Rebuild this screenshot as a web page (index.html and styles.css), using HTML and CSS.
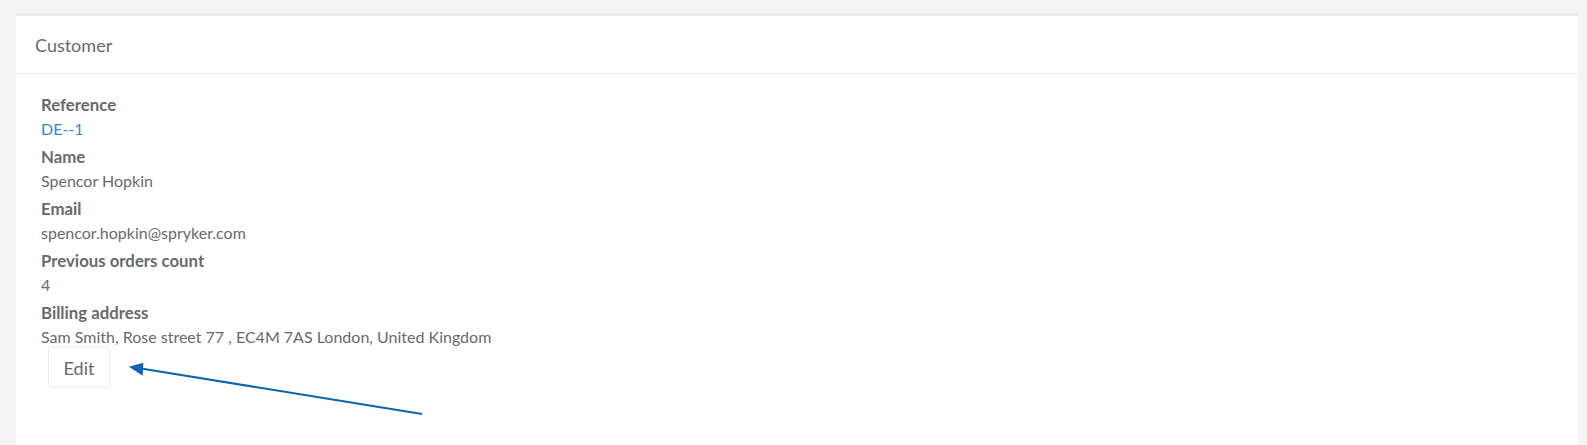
FILE: index.html
```html
<!DOCTYPE html>
<html lang="en">
<head>
<meta charset="utf-8">
<title>Customer</title>
<link rel="stylesheet" href="styles.css">
</head>
<body>
<div class="panel">
  <div class="panel-title">
    <h5>Customer</h5>
  </div>
  <div class="panel-content">
    <dl class="info">
      <dt>Reference</dt>
      <dd><a href="#" class="link">DE--1</a></dd>
      <dt>Name</dt>
      <dd>Spencor Hopkin</dd>
      <dt>Email</dt>
      <dd>spencor.hopkin@spryker.com</dd>
      <dt>Previous orders count</dt>
      <dd>4</dd>
      <dt>Billing address</dt>
      <dd class="last">Sam Smith, Rose street 77 , EC4M 7AS London, United Kingdom</dd>
    </dl>
    <a href="#" class="btn">Edit</a>
  </div>
  <svg class="arrow" width="440" height="100" viewBox="0 0 440 100" xmlns="http://www.w3.org/2000/svg">
    <line x1="406" y1="73" x2="125" y2="27.5" stroke="#0d62b1" stroke-width="2"/>
    <polygon points="113,25.7 127.3,21.7 126.7,34.7" fill="#0d62b1"/>
  </svg>
</div>
</body>
</html>
```

FILE: styles.css
```css
html, body {
  margin: 0;
  padding: 0;
}
body {
  background: #f3f3f4;
  padding: 13px 9px 0 16px;
  font-family: Lato, "Open Sans", "Liberation Sans", sans-serif;
  color: #676a6c;
  height: 445px;
  box-sizing: border-box;
  overflow: hidden;
}
.panel {
  position: relative;
  background: #ffffff;
  border-top: 3px solid #e7eaec;
  height: 100%;
}
.panel-title {
  height: 57px;
  border-bottom: 1px solid #e7eaec;
  padding-left: 19px;
  display: flex;
  align-items: center;
}
.panel-title h5 {
  margin: 0;
  font-size: 18px;
  font-weight: 400;
  color: #676a6c;
  padding-top: 1px;
}
.panel-content {
  padding: 19px 25px 0 25px;
}
.info {
  margin: 0;
  font-size: 16px;
  line-height: 23.5px;
}
.info dt {
  font-weight: 700;
  font-size: 16.8px;
  color: #676a6c;
}
.info dd {
  margin: 0 0 5px 0;
}
.info dd.last {
  margin-bottom: 0;
}
.link {
  color: #3a85c6;
  text-decoration: none;
}
.btn {
  display: inline-flex;
  align-items: center;
  justify-content: center;
  margin: -1px 0 0 7px;
  width: 62px;
  height: 41px;
  box-sizing: border-box;
  border: 1px solid #e7eaec;
  border-radius: 3px;
  font-size: 18px;
  color: #676a6c;
  text-decoration: none;
  background: #ffffff;
}
.arrow {
  position: absolute;
  left: 0;
  top: 325px;
}
```
